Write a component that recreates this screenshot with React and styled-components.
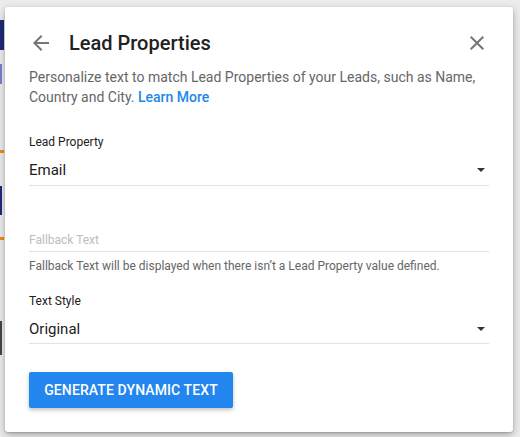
import styled, { createGlobalStyle } from "styled-components";

const GlobalStyle = createGlobalStyle`
  html, body {
    margin: 0;
    padding: 0;
    background: #ececec;
    font-family: Roboto, "Liberation Sans", Arial, sans-serif;
    -webkit-font-smoothing: antialiased;
  }
`;

const Page = styled.div`
  width: 520px;
  height: 437px;
  display: flex;
  align-items: flex-start;
  overflow: hidden;
  background: #ececec;
`;

const EdgeStrip = styled.div`
  width: 5px;
  display: flex;
  flex-direction: column;
  flex-shrink: 0;
`;

const EdgeMark = styled.div`
  height: ${(p) => p.h}px;
  margin-top: ${(p) => p.top}px;
  background: ${(p) => p.color};
  width: ${(p) => p.w || 4}px;
`;

const Dialog = styled.div`
  margin-top: 7px;
  width: 508px;
  height: 425px;
  box-sizing: border-box;
  background: #fff;
  border-radius: 3px;
  box-shadow: 0 3px 8px rgba(0, 0, 0, 0.28), 0 1px 2px rgba(0, 0, 0, 0.18);
  padding: 24px;
  display: flex;
  flex-direction: column;
`;

const Header = styled.div`
  display: flex;
  align-items: center;
  height: 24px;
`;

const IconButton = styled.button`
  border: none;
  background: none;
  padding: 0;
  width: 24px;
  height: 24px;
  display: flex;
  align-items: center;
  justify-content: center;
  color: #757575;
  cursor: pointer;
  margin-left: ${(p) => (p.end ? "auto" : "0")};
`;

const Title = styled.h2`
  margin: 0 0 0 16px;
  font-size: 20px;
  font-weight: 500;
  color: #212121;
  line-height: 24px;
`;

const Description = styled.p`
  margin: 12px 0 0;
  font-size: 14px;
  line-height: 20px;
  color: #666;
`;

const Link = styled.a`
  color: #1e88e5;
  font-weight: 500;
  text-decoration: none;
`;

const Label = styled.div`
  margin-top: ${(p) => p.top}px;
  font-size: 12px;
  line-height: 16px;
  color: #212121;
`;

const Select = styled.div`
  margin-top: ${(p) => p.top}px;
  display: flex;
  align-items: center;
  justify-content: space-between;
  height: 25px;
  border-bottom: 1px solid #e2e2e2;
  font-size: 15px;
  color: #212121;
  padding-bottom: 2px;
`;

const Caret = styled.span`
  width: 0;
  height: 0;
  border-left: 4px solid transparent;
  border-right: 4px solid transparent;
  border-top: 4px solid #333;
  margin-right: 4px;
`;

const Input = styled.input`
  margin-top: ${(p) => p.top}px;
  border: none;
  border-bottom: 1px solid #e2e2e2;
  outline: none;
  padding: 0 0 3px;
  font-family: inherit;
  font-size: 12px;
  line-height: 16px;
  color: #212121;
  &::placeholder {
    color: #bdbdbd;
  }
`;

const Helper = styled.div`
  margin-top: 6px;
  font-size: 12px;
  line-height: 16px;
  color: #666;
`;

const PrimaryButton = styled.button`
  margin-top: ${(p) => p.top}px;
  align-self: flex-start;
  height: 36px;
  width: 204px;
  border: none;
  border-radius: 2px;
  background: #2385ee;
  color: #fff;
  font-family: inherit;
  font-size: 14px;
  font-weight: 500;
  text-transform: uppercase;
  letter-spacing: 0.1px;
  box-shadow: 0 2px 4px rgba(0, 0, 0, 0.25);
  cursor: pointer;
`;

const BackIcon = () => (
  <svg width="24" height="24" viewBox="0 0 24 24" fill="currentColor">
    <path d="M20 11H7.83l5.59-5.59L12 4l-8 8 8 8 1.41-1.41L7.83 13H20v-2z" />
  </svg>
);

const CloseIcon = () => (
  <svg width="24" height="24" viewBox="0 0 24 24" fill="currentColor">
    <path d="M19 6.41L17.59 5 12 10.59 6.41 5 5 6.41 10.59 12 5 17.59 6.41 19 12 13.41 17.59 19 19 17.59 13.41 12z" />
  </svg>
);

export default function App() {
  return (
    <>
      <GlobalStyle />
      <Page>
        <EdgeStrip>
          <EdgeMark top={20} h={30} color="#1f2a7a" />
          <EdgeMark top={14} h={20} color="#7480cf" w={2} />
          <EdgeMark top={66} h={3} color="#f08a1a" />
          <EdgeMark top={33} h={29} color="#1f2a7a" w={2} />
          <EdgeMark top={22} h={3} color="#f08a1a" />
          <EdgeMark top={81} h={34} color="#444" w={2} />
        </EdgeStrip>
        <Dialog>
          <Header>
            <IconButton aria-label="Back">
              <BackIcon />
            </IconButton>
            <Title>Lead Properties</Title>
            <IconButton end aria-label="Close">
              <CloseIcon />
            </IconButton>
          </Header>
          <Description>
            Personalize text to match Lead Properties of your Leads, such as Name,
            Country and City. <Link href="#">Learn More</Link>
          </Description>
          <Label top={27}>Lead Property</Label>
          <Select top={8}>
            <span>Email</span>
            <Caret />
          </Select>
          <Input top={46} placeholder="Fallback Text" />
          <Helper>
            Fallback Text will be displayed when there isn’t a Lead Property value defined.
          </Helper>
          <Label top={19}>Text Style</Label>
          <Select top={8}>
            <span>Original</span>
            <Caret />
          </Select>
          <PrimaryButton top={28}>Generate Dynamic Text</PrimaryButton>
        </Dialog>
      </Page>
    </>
  );
}
